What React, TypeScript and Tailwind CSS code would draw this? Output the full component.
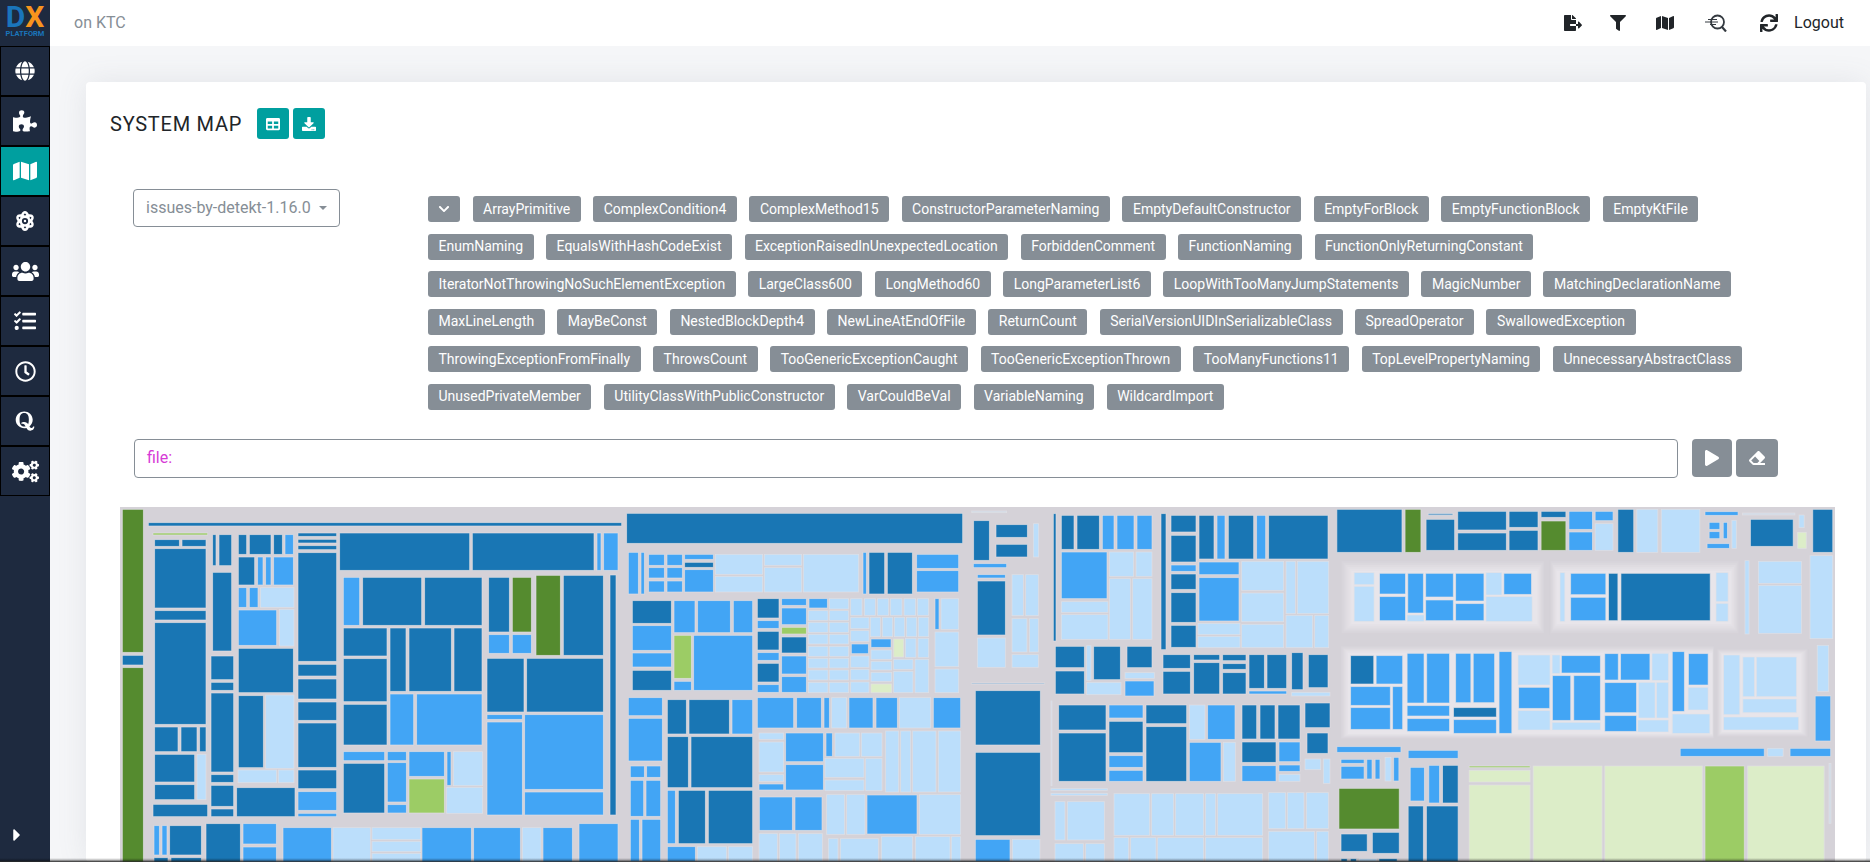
import React from "react";
import {
  FaGlobe, FaPuzzlePiece, FaMap, FaAtom, FaUsers, FaTasks, FaRegClock, FaQuora, FaCogs, FaCaretRight,
  FaTable, FaDownload, FaChevronDown, FaPlay, FaEraser, FaFileExport, FaFilter, FaSync,
} from "react-icons/fa";

const C: Record<string, string> = {
  D: "#1976b4", B: "#42a5f5", L: "#bbdefb", G: "#558b2f", M: "#9ccc65", P: "#dcedc8", F: "#76a9cf", A: "#d0dbe6",
};

type Z = { ox: number; oy: number; sx: number; sy: number; r: string };

const parse = (r: string) =>
  r.trim().split(/\s+/).map((t) => {
    const c = t[0];
    const [a, b, d, e] = t.slice(1).split(",").map(Number);
    return { c, a, b, d, e };
  });

const z4 = `M129,339,293,345 D134,359,208,379 D216,359,288,379 D134,386,288,564 D134,572,288,600 D134,608,288,913
D134,921,204,995 D213,921,261,995 D269,921,288,995 D134,1003,254,1086 L261,1003,288,1139 D134,1094,254,1139 D129,1153,293,1190
D308,344,318,437 D327,344,365,437 D308,457,365,693 D303,708,371,779 D303,787,371,811 D303,819,371,1056 D303,1064,371,1087 D303,1096,371,1159 D303,1167,371,1190
D385,344,410,403 D418,344,483,403 D491,344,517,403 B525,344,550,403 D385,411,434,495 B443,411,459,495 B467,411,483,495 B491,411,550,495
B385,503,410,562 B418,503,444,562 L451,503,552,562 B385,570,500,676 L508,568,552,678 D385,685,550,818 D385,827,460,1043 L467,825,552,1045 L384,1050,500,1088 L505,1050,552,1088 D380,1103,555,1190
D564,339,680,349 D564,358,680,369 D564,377,680,389 D564,398,680,724 D564,733,680,768 D564,777,680,837 D564,846,680,901 D564,909,680,1042 D564,1050,680,1106 B564,1115,680,1171 B564,1180,680,1190
D689,339,1079,451 D1087,339,1452,451 B1461,339,1473,451 B1481,339,1524,451
B700,472,749,616 D758,472,935,616 D944,472,1116,616 D700,624,831,708 D840,624,888,814 D897,624,1024,814 D1032,624,1116,814 D700,716,831,845 D700,853,831,975 B840,822,911,975 B920,822,1116,975
B700,995,824,1022 B832,995,889,1022 D700,1030,824,1179 B832,1028,889,1146 B832,1154,889,1179 B897,995,1003,1069 M897,1077,1003,1179 B1011,995,1023,1096 L1030,995,1118,1097 L1010,1102,1118,1180
D1136,472,1198,636 G1207,472,1264,636 B1136,644,1198,700 B1207,644,1264,700 G1278,466,1351,706 D1360,466,1480,706 D1131,715,1242,876 D1250,715,1480,876 B1131,884,1237,898 B1131,906,1237,1185 B1244,884,1480,1108 B1244,1116,1480,1185
D1500,465,1518,1185 D115,308,1535,318
G37,268,100,697 D37,706,100,735 G37,743,100,1330
B132,1217,148,1305 B156,1217,171,1305 D179,1217,274,1305 D288,1211,391,1330 B399,1211,499,1272 B399,1281,499,1330 D132,1313,174,1330 D183,1313,274,1330
B519,1223,664,1330 L669,1223,781,1330 L786,1223,932,1259 L786,1264,932,1295 L786,1300,932,1330 B936,1223,1084,1330 B1091,1223,1231,1330 L1237,1223,1293,1330 B1299,1223,1387,1330 B1407,1211,1524,1330`;

const z5 = `D50,40,1058,130 B55,157,85,282 B93,157,103,282 B116,163,163,196 B171,163,217,196 B116,203,163,234 B171,203,217,234 B116,243,163,276 B171,243,217,276
B224,163,310,178 D224,187,310,202 B224,209,310,276 L316,163,458,223 L316,229,458,276 L463,163,575,196 L463,203,575,276 L580,163,746,276 B759,157,769,282 D777,157,824,282 D832,157,907,282 B920,163,1046,205 B920,212,1046,276
D67,302,184,370 B67,377,184,451 B67,459,184,501 D67,511,184,571 B192,302,255,398 B263,302,361,398 B370,302,428,398 M192,406,244,535 B192,544,244,571 B251,406,428,571
D442,296,507,354 B442,362,507,385 D442,394,507,450 B442,458,507,481 D442,490,507,546 B442,554,507,577
B515,296,589,316 B515,324,589,374 M515,382,589,402 D515,411,589,459 B515,468,589,522 B515,530,589,577
B597,296,652,324 L658,296,716,327 L595,332,654,361 L658,332,716,361 L595,367,654,397 L658,367,716,397 L595,403,654,432 L658,403,716,432 L595,439,654,469 L658,439,716,469 L595,475,654,504 L658,475,716,504 L595,510,654,540 L658,510,716,540 L595,547,654,578 L658,547,716,578
L722,296,756,346 L763,296,796,346 L802,296,836,346 L841,296,876,346 L882,296,917,346 L922,296,956,346 L722,352,777,386 L781,352,811,410 L817,352,848,410 L853,352,884,410 L889,352,920,410 L925,352,956,410
L722,392,777,424 B724,432,775,461 L722,468,777,502 L722,508,777,540 L722,546,777,578 B783,417,843,442 L783,450,845,478 L783,484,845,510 L783,517,845,544 P783,552,845,578 P851,417,881,471 L886,415,918,472 L924,415,956,472 L851,478,909,508 L851,514,909,578 L915,478,956,578
B975,296,987,388 L993,296,1046,388 L975,396,1046,500 L975,507,1046,578
B55,593,157,647 B55,655,157,783 B61,798,103,832 B110,798,152,832 B61,841,101,949 B108,841,152,949 B61,958,88,1085 B96,958,152,1085
D172,599,229,702 D237,599,358,702 B366,599,428,702 D172,710,235,863 D243,710,428,863 B172,871,196,1031 D205,871,286,1031 D295,871,428,1031 B172,1040,256,1085 L262,1040,350,1085 L355,1040,428,1085
B442,593,551,684 B560,593,634,684 B642,593,658,684 L665,593,710,684 B717,593,789,684 B798,593,862,684 L868,593,962,684 B970,593,1052,684
L447,699,521,718 L447,726,521,816 L447,824,521,844 B447,852,521,870 B527,699,640,785 B527,794,640,870 B648,699,667,769 L675,699,749,769 L754,699,816,769 L645,775,762,832 L645,840,762,872 L767,775,816,872
L827,693,866,876 L872,693,902,876 L908,693,978,876 L985,693,1052,876 B448,891,547,991 B555,891,636,991 L650,884,704,1003 L710,884,765,1003 B771,885,921,1002 L928,884,1052,1003
L447,1001,502,1085 L508,1001,558,1085 L565,1001,637,1085 L655,1016,684,1085 L691,1016,805,1085 L814,1010,908,1085 L916,1010,1020,1085 L1024,1010,1052,1085
A1085,33,1190,38 D1091,62,1138,181 D1158,74,1252,112 D1158,133,1252,171 L1270,71,1286,171 B1090,191,1190,203 B1102,224,1186,234 D1102,243,1186,405 L1102,414,1186,502
L1206,224,1240,347 L1247,224,1285,347 L1206,356,1251,456 L1258,356,1285,456 L1206,464,1285,502 F1085,549,1303,552 D1096,572,1291,735 D1096,757,1291,1007 B1096,1018,1200,1085 L1207,1018,1290,1085`;

const z6 = `D10,41,18,423 D34,46,72,148 D81,46,148,148 B157,46,192,148 B201,46,252,148 B261,46,306,148 B34,156,171,296 L178,156,251,229 L258,156,306,229 L34,305,174,337 L34,344,174,418 L178,236,241,418 L248,236,306,418
D16,439,103,503 D16,513,103,582 L110,437,123,541 D131,439,211,539 L110,547,213,584 D231,439,306,503 L225,518,313,535 B225,543,312,588
D333,41,348,449 D363,46,438,96 D363,106,438,186 B363,195,438,214 D363,222,438,268 D363,278,438,367 D363,376,438,442 D447,46,492,177 B501,46,525,177 D535,46,611,177 B620,46,647,177 D656,46,834,177
B447,186,567,224 B447,233,567,363 L444,370,570,404 L444,409,570,443 L575,184,701,271 L575,279,701,365 L708,184,736,341 L742,184,836,341 L575,373,701,443 L708,346,788,443 L794,346,836,443
D339,464,421,505 D339,514,421,582 D431,464,509,480 D431,488,509,582 D518,464,588,482 D518,491,588,508 D518,518,588,582 D597,464,643,565 D651,464,710,565 B597,573,710,582 D725,458,759,569 D775,464,834,563 L725,577,840,588
A3,603,6,857 D26,615,168,690 D26,699,168,844 B177,615,279,654 D177,664,279,758 B177,767,279,802 B177,811,279,844 D288,615,410,671 D288,680,410,844 L418,615,465,718 B473,615,555,718 B418,727,513,844 L520,727,556,844
D576,615,620,717 D630,615,675,717 D684,615,750,717 D576,726,678,787 B687,726,750,785 B576,797,678,844 B687,795,750,814 L687,823,750,844 D765,609,840,683 D771,699,834,760 L765,777,812,809 L820,777,840,850
L3,866,172,871 L3,880,172,886 L15,905,45,1020 L52,905,163,1020 L15,1031,100,1085 L107,1031,163,1085
L192,881,299,1006 L305,881,371,1006 L376,881,461,1006 L466,881,497,1006 L503,881,638,1006 L192,1013,236,1085 L242,1013,318,1085 L323,1013,461,1085 L466,1013,638,1085
L656,878,707,986 L712,878,762,986 L769,878,835,986 L656,994,793,1085 L800,994,835,1085`;

const z7 = `D20,28,209,157 G218,28,264,157 F285,40,357,46 D279,58,362,151 D371,34,512,90 D371,99,512,151 D520,34,604,82 D520,91,604,151 D613,34,685,52 G613,63,685,151 B694,34,762,88 B694,96,762,151 B770,34,822,62 L770,71,822,151
D836,28,882,157 L891,28,952,157 L962,28,1074,157 B1089,35,1185,46 B1101,67,1132,88 B1101,95,1132,116 B1142,67,1154,116 B1095,131,1160,145 L1167,61,1180,145 A1198,39,1350,45 D1221,58,1345,139 L1362,45,1377,83 P1358,97,1383,145 D1402,28,1460,157
L70,218,128,254 L70,259,128,364 B144,220,219,282 B144,290,219,362 B226,220,271,339 L224,345,273,364 B278,220,358,291 B278,300,358,362 B365,220,447,303 B365,311,447,362 L453,218,499,285 B505,220,585,283 L453,290,587,364
L668,218,682,364 B699,220,801,284 B699,292,801,362 D809,220,836,362 D845,220,1104,362 L1121,218,1156,305 L1121,310,1156,364 L1205,182,1217,402 L1244,184,1369,250 L1244,256,1369,400 L1394,167,1460,416
D60,467,127,552 B134,467,211,552 B60,560,175,616 B60,623,175,688 B182,560,211,688 B224,460,273,609 B281,460,347,609 B224,617,347,648 B224,656,347,694 B365,460,409,608 B416,460,478,608 D359,623,483,651 B359,659,483,700 B491,455,528,700
L546,465,639,555 L645,465,668,520 B672,467,785,519 B548,562,638,625 L546,632,639,690 B646,527,699,661 B708,527,785,661 L645,667,785,690 B798,461,837,540 B844,461,929,540 L935,460,983,541 B798,548,890,638 L896,547,944,654 L948,547,983,654 B798,647,890,694 L894,660,983,696
B994,455,1029,634 B1041,461,1098,555 L1040,562,1098,630 L994,642,1103,700 L1143,465,1190,644 L1199,471,1233,590 L1238,471,1355,590 L1199,597,1355,638 L1143,651,1361,690 L1415,436,1448,574 B1409,588,1454,723
B20,740,206,757 B32,778,99,790 B32,799,99,837 B107,778,122,837 B131,778,145,837 L160,772,177,843 B185,772,200,843 G26,865,201,987 D32,1002,108,1054 D123,997,201,1060 D32,1076,50,1085 D59,1076,77,1085 L85,1076,135,1085 D142,1076,195,1085
B227,751,372,775 B233,802,274,903 B287,796,318,909 D327,796,372,909 D227,918,271,1085 D280,918,372,1085 B1017,745,1261,769 L1271,745,1316,769 B1336,745,1454,769
M404,798,581,803 P404,811,581,846 P404,855,581,1085 P590,798,790,1085 P798,798,1081,1085 M1089,798,1203,1085 P1213,798,1435,1085 A1449,790,1455,970`;

const zooms: Z[] = [
  { ox: 110, oy: 420, sx: 3, sy: 3, r: z4 },
  { ox: 610, oy: 500, sx: 3, sy: 3, r: z5 },
  { ox: 1050, oy: 500, sx: 3, sy: 3, r: z6 },
  { ox: 1330, oy: 500, sx: 2.904, sy: 3, r: z7 },
];

const cells = zooms.flatMap((z) =>
  parse(z.r).map((p) => ({
    x: z.ox + p.a / z.sx,
    y: z.oy + p.b / z.sy,
    w: (p.d - p.a) / z.sx,
    h: (p.e - p.b) / z.sy,
    fill: C[p.c],
  }))
);

const lerp = (t: number) => {
  const a = [213, 210, 216];
  const b = [232, 229, 234];
  return `rgb(${a.map((v, i) => Math.round(v + (b[i] - v) * t)).join(",")})`;
};

const glows = [
  [28, 178, 625, 405, 62, 212, 602, 372],
  [637, 178, 1190, 405, 658, 212, 1165, 372],
  [28, 435, 1115, 718, 52, 458, 1110, 702],
  [1122, 445, 1390, 712, 1138, 462, 1368, 696],
].map(([a, b, c, d, e, f, h, i]) => ({ a, b, c, d, e, f, h, i }));

function Treemap() {
  const steps = [0, 1, 2, 3, 4, 5, 6];
  return (
    <svg width={1715} height={356} viewBox="120 507 1715 356" className="ml-[34px] mt-[29px] shrink-0">
      <rect x={120} y={507} width={1715} height={356} fill="#d5d2d8" />
      {glows.flatMap((g, gi) =>
        steps.map((s) => {
          const t = s / 6;
          const x1 = 1330 + (g.a + (g.e - g.a) * t) / 2.904;
          const x2 = 1330 + (g.c + (g.h - g.c) * t) / 2.904;
          const y1 = 500 + (g.b + (g.f - g.b) * t) / 3;
          const y2 = 500 + (g.d + (g.i - g.d) * t) / 3;
          return <rect key={`${gi}-${s}`} x={x1} y={y1} width={x2 - x1} height={y2 - y1} fill={lerp(t)} />;
        })
      )}
      {cells.map((c, i) => (
        <rect key={i} x={c.x} y={c.y} width={c.w} height={c.h} fill={c.fill} stroke="#e3e1e6" strokeOpacity={0.75} strokeWidth={0.8} />
      ))}
    </svg>
  );
}

const tagRows = [
  ["ArrayPrimitive", "ComplexCondition4", "ComplexMethod15", "ConstructorParameterNaming", "EmptyDefaultConstructor", "EmptyForBlock", "EmptyFunctionBlock", "EmptyKtFile"],
  ["EnumNaming", "EqualsWithHashCodeExist", "ExceptionRaisedInUnexpectedLocation", "ForbiddenComment", "FunctionNaming", "FunctionOnlyReturningConstant"],
  ["IteratorNotThrowingNoSuchElementException", "LargeClass600", "LongMethod60", "LongParameterList6", "LoopWithTooManyJumpStatements", "MagicNumber", "MatchingDeclarationName"],
  ["MaxLineLength", "MayBeConst", "NestedBlockDepth4", "NewLineAtEndOfFile", "ReturnCount", "SerialVersionUIDInSerializableClass", "SpreadOperator", "SwallowedException"],
  ["ThrowingExceptionFromFinally", "ThrowsCount", "TooGenericExceptionCaught", "TooGenericExceptionThrown", "TooManyFunctions11", "TopLevelPropertyNaming", "UnnecessaryAbstractClass"],
  ["UnusedPrivateMember", "UtilityClassWithPublicConstructor", "VarCouldBeVal", "VariableNaming", "WildcardImport"],
];

function Tag({ t }: { t: string }) {
  return (
    <span className="flex h-[26px] items-center rounded-[3px] bg-[#868e96] px-[10.5px] text-[14px] text-white">
      {t}
    </span>
  );
}

const nav = [
  <FaGlobe size={20} />,
  <FaPuzzlePiece size={24} />,
  <FaMap size={24} />,
  <FaAtom size={20} />,
  <FaUsers size={27} />,
  <FaTasks size={22} />,
  <FaRegClock size={21} />,
  <FaQuora size={22} />,
  <FaCogs size={27} />,
];

export default function App() {
  return (
    <div className="relative flex h-[862px] w-[1870px] overflow-hidden bg-[#f5f6f8] font-[Roboto,sans-serif]">
      <aside className="flex h-full w-[50px] shrink-0 flex-col bg-[#1e2a3f]">
        <div className="flex h-[46px] shrink-0 flex-col items-center pt-[5px] font-bold">
          <div className="flex h-[24px] items-center text-[30px] leading-[24px]">
            <span className="text-[#1a75bb]">D</span>
            <span className="text-[#f7941d]">X</span>
          </div>
          <div className="mt-[1px] text-[7.5px] leading-[8px] text-[#1a75bb]">PLATFORM</div>
        </div>
        {nav.map((n, i) => (
          <div
            key={i}
            className={`flex h-[50px] shrink-0 items-center justify-center border-[1.5px] border-black text-white ${i === 2 ? "bg-[#009f9f]" : ""}`}
          >
            {n}
          </div>
        ))}
        <div className="mt-auto flex h-[50px] items-center justify-center pb-[4px] text-white">
          <FaCaretRight size={20} className="-ml-[16px]" />
        </div>
      </aside>
      <div className="flex min-w-0 flex-1 flex-col">
        <header className="flex h-[46px] shrink-0 items-center bg-white pl-[24px] pr-[26px]">
          <span className="text-[16px] text-[#868e96]">on KTC</span>
          <div className="ml-auto flex items-center text-[#212529]">
            <FaFileExport size={18} />
            <FaFilter size={16} className="ml-[28px]" />
            <FaMap size={18} className="ml-[30px]" />
            <svg width={22} height={18} viewBox="0 0 22 18" className="ml-[31px]" fill="none" stroke="#343a40">
              <circle cx={12.5} cy={8} r={6.5} strokeWidth={1.8} />
              <path d="M17 13l4 4.5" strokeWidth={2.2} />
              <path d="M0 8h13M3 5.5h9M5 10.5h6" strokeWidth={1} />
            </svg>
            <FaSync size={18} className="ml-[33px]" />
            <span className="ml-[16px] text-[16px]">Logout</span>
          </div>
        </header>
        <div className="flex min-h-0 flex-1 pl-[36px] pr-[4px] pt-[36px]">
          <main className="flex flex-1 flex-col rounded-[4px] bg-white shadow-[0_0_30px_rgba(100,110,125,0.12)]">
            <div className="ml-[24px] mt-[26px] flex h-[31px] shrink-0 items-center">
              <h1 className="text-[20px] font-normal tracking-[0.75px] text-[#212529]">SYSTEM MAP</h1>
              <button className="ml-[15px] flex h-[31px] w-[32px] items-center justify-center rounded-[3px] bg-[#009f9f] text-white">
                <FaTable size={14} />
              </button>
              <button className="ml-[4px] flex h-[31px] w-[32px] items-center justify-center rounded-[3px] bg-[#009f9f] text-white">
                <FaDownload size={14} />
              </button>
            </div>
            <div className="ml-[47px] mt-[50px] flex shrink-0 items-start">
              <div className="flex h-[38px] w-[207px] items-center rounded-[4px] border border-[#868e96] pl-[12px] text-[16px] text-[#868e96]">
                <span>issues-by-detekt-1.16.0</span>
                <span className="ml-[8px] h-0 w-0 border-x-[4px] border-t-[4px] border-x-transparent border-t-[#868e96]" />
              </div>
              <div className="ml-[88px] flex flex-col gap-[11.6px] pt-[7px]">
                {tagRows.map((row, i) => (
                  <div key={i} className="flex gap-[12.5px]">
                    {i === 0 && (
                      <span className="flex h-[26px] w-[32px] items-center justify-center rounded-[3px] bg-[#868e96] text-white">
                        <FaChevronDown size={12} />
                      </span>
                    )}
                    {row.map((t) => (
                      <Tag key={t} t={t} />
                    ))}
                  </div>
                ))}
              </div>
            </div>
            <div className="ml-[48px] mt-[29px] flex shrink-0 items-center">
              <div className="flex h-[39px] w-[1544px] items-center rounded-[4px] border border-[#868e96] pl-[12px] text-[16px] text-[#d63bd6]">
                file:
              </div>
              <button className="ml-[14px] flex h-[38px] w-[40px] items-center justify-center rounded-[4px] bg-[#868e96] text-white">
                <FaPlay size={16} />
              </button>
              <button className="ml-[4px] flex h-[38px] w-[42px] items-center justify-center rounded-[4px] bg-[#868e96] text-white">
                <FaEraser size={16} />
              </button>
            </div>
            <Treemap />
          </main>
        </div>
      </div>
      <div className="absolute bottom-0 left-0 h-[4px] w-full bg-gradient-to-b from-transparent via-[#00000040] to-[#2b2b2b]" />
    </div>
  );
}
